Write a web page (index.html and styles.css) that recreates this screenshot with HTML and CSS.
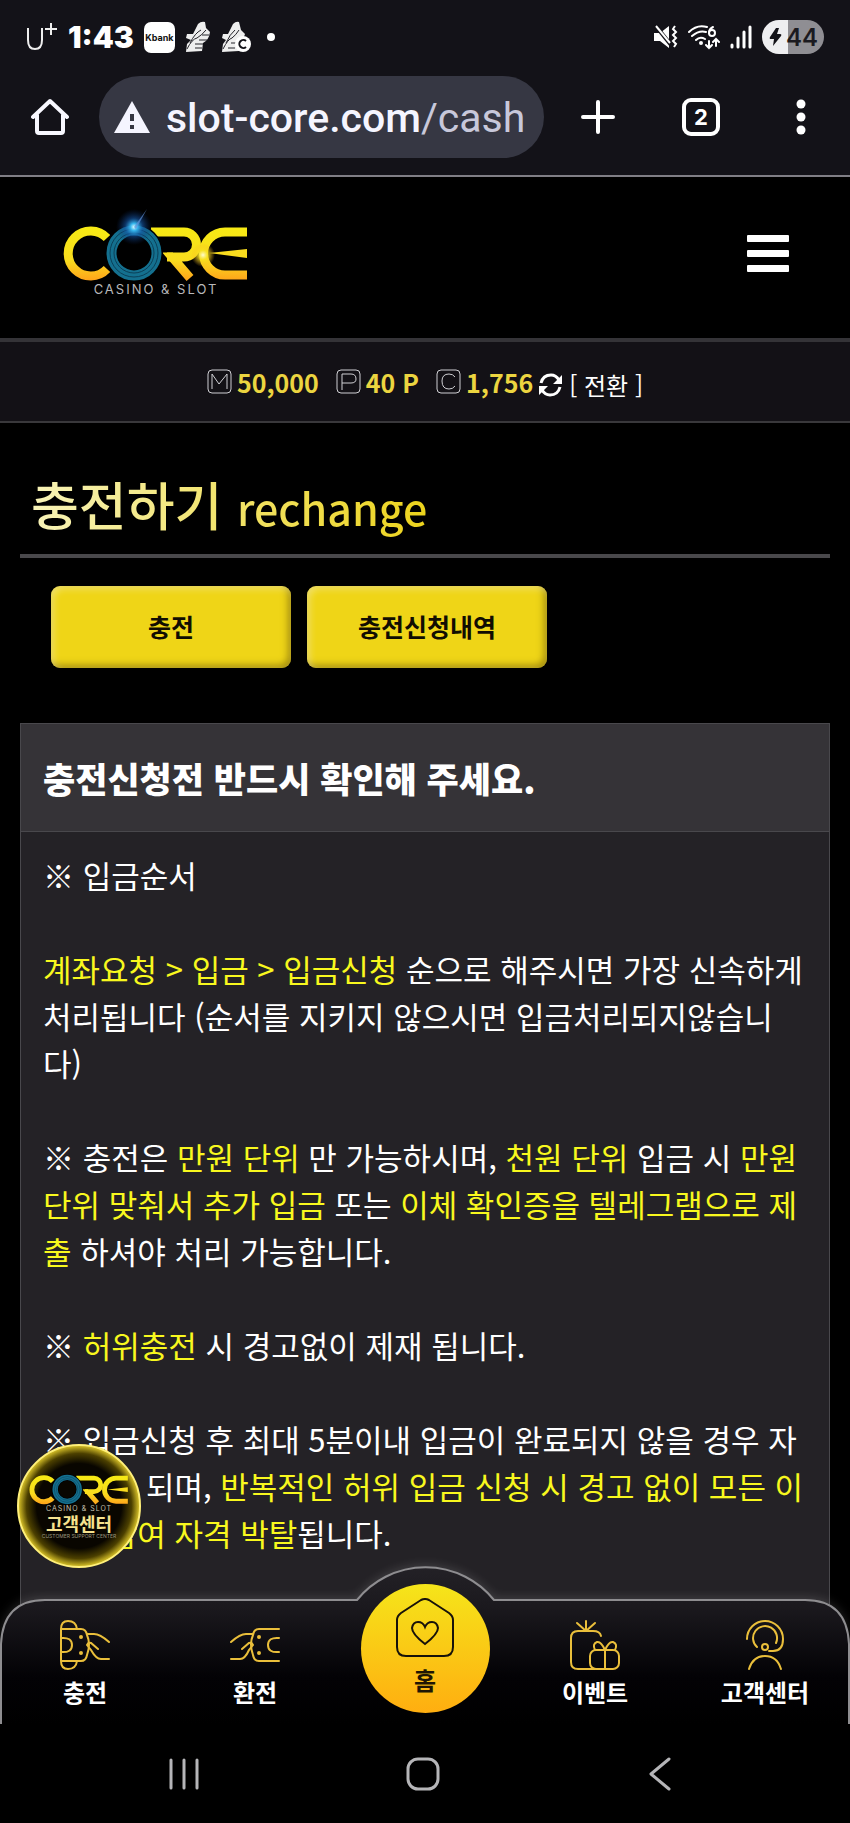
FILE: index.html
```html
<!DOCTYPE html>
<html lang="ko">
<head>
  <meta charset="UTF-8">
  <meta name="viewport" content="width=device-width, initial-scale=1.0">
  <title>충전하기</title>
  <link rel="stylesheet" href="styles.css">
</head>
<body>
  <!-- Shared logo shapes -->
  <svg class="defs" aria-hidden="true">
    <defs>
      <linearGradient id="goldStroke" gradientUnits="userSpaceOnUse" x1="0" y1="28" x2="0" y2="82">
        <stop offset="0" stop-color="#f7ea14"/>
        <stop offset=".6" stop-color="#f9dc1e"/>
        <stop offset="1" stop-color="#ff9f1a"/>
      </linearGradient>
      <radialGradient id="blueFlare">
        <stop offset="0" stop-color="#d8fbff"/>
        <stop offset=".2" stop-color="#35b5ec"/>
        <stop offset=".5" stop-color="#1557a8" stop-opacity=".6"/>
        <stop offset="1" stop-color="#0a2a66" stop-opacity="0"/>
      </radialGradient>
      <radialGradient id="goldFlare">
        <stop offset="0" stop-color="#fffbd0"/>
        <stop offset=".4" stop-color="#f8e21e" stop-opacity=".8"/>
        <stop offset="1" stop-color="#f8b51e" stop-opacity="0"/>
      </radialGradient>
      <symbol id="core" viewBox="0 0 190 82">
        <g fill="none" stroke="url(#goldStroke)" stroke-width="9">
          <path d="M46 38 A22.500 22.500 0 1 0 46 69"/>
          <path d="M90 32 H123 A12 12 0 0 1 123 57 H111 L129 78"/>
          <path d="M186 32 H164 A21.500 21.500 0 0 0 164 75 H186"/>
          <path d="M106 57 H112"/>
        </g>
        <path d="M148 53 L186 49 V58 Z" fill="#f9dc1e"/>
        <circle cx="73" cy="53" r="22.500" fill="none" stroke="#000" stroke-width="13"/>
        <circle cx="73" cy="53" r="22.500" fill="none" stroke="#14708f" stroke-width="10"/>
        <circle cx="73" cy="53" r="24" fill="none" stroke="#0b4058" stroke-width="1"/>
        <circle cx="73" cy="53" r="20" fill="none" stroke="#0b4058" stroke-width="1"/>
      </symbol>
    </defs>
  </svg>

  <div class="status-bar">
    <div class="status-left">
      <svg class="carrier" width="32" height="30" viewBox="0 0 32 30" fill="none" stroke="#eee" stroke-width="2">
        <path d="M2 6 V18 Q2 27 9 27 Q16 27 16 18 V6"/>
        <path d="M19 7 H31 M25 1 V13" />
      </svg>
      <span class="clock">1:43</span>
      <span class="kbank">Kbank</span>
      <svg width="26" height="32" viewBox="0 0 26 32">
        <path d="M13 3 Q16 0 20 1 L21 7 L25 11 Q24 19 18 22 L17 30 L1 31 L2 23 L6 19 L1 17 L2 13 L8 13 Z" fill="#eee"/>
        <path d="M2 28 Q7 18 12 17 Q17 14 21 9 M5 22 Q10 12 16 9 M10 23 h8 M10 27 h7 M14 19 h8 M17 14 h7" stroke="#25242a" fill="none"/>
      </svg>
      <svg class="shoe-c" width="30" height="32" viewBox="0 0 30 32">
        <path d="M12 3 Q15 0 18 1 L20 9 L24 13 L18 30 L1 31 L2 23 L5 19 L1 17 L2 13 L7 13 Z" fill="#eee"/>
        <path d="M2 28 Q7 18 11 17 Q15 14 18 9 M5 22 Q9 13 14 9 M7 27 h7 M10 22 h7" stroke="#25242a" fill="none"/>
        <circle cx="22" cy="23" r="8" fill="#fff"/>
        <path d="M25 20 A4 4 0 1 0 25 26" stroke="#131218" stroke-width="2" fill="none"/>
      </svg>
      <span class="more-dot"></span>
    </div>
    <div class="status-right">
      <svg width="25" height="26" viewBox="0 0 25 26">
        <path d="M1 9 H7 L16 2 V24 L7 17 H1 Z" fill="#fff"/>
        <path d="M2 1 L18 21" stroke="#131218" stroke-width="4"/>
        <path d="M3 2 L17 19" stroke="#fff" stroke-width="2"/>
        <path d="M22 2 l-2 3 3 3 -3 3 3 3 -3 3 3 3 -2 3" stroke="#fff" stroke-width="2" fill="none"/>
      </svg>
      <svg width="32" height="26" viewBox="0 0 32 26" fill="none" stroke="#fff" stroke-width="2" stroke-linecap="round">
        <path d="M1 8 Q9 0 19 3 M4 12 Q11 6 18 8 M8 16 Q12 12 17 15"/>
        <circle cx="13" cy="19" r="1" fill="#fff"/>
        <path d="M25 3 Q21 5 21 9"/><circle cx="24" cy="9" r="3"/>
        <path d="M21 17 V24 M18 21 L21 24 L24 21 M28 22 V15 M25 18 L28 15 L31 18"/>
      </svg>
      <svg width="22" height="26" viewBox="0 0 22 26" stroke="#fff" stroke-width="3" stroke-linecap="round">
        <path d="M2 21 V23 M8 14 V23 M14 8 V23 M20 3 V23"/>
      </svg>
      <span class="battery">
        <svg width="13" height="18" viewBox="0 0 13 18"><path d="M7 0 L1 9 Q0 11 2 11 H5 L4 18 L12 8 Q13 6 11 6 H8 L10 0 Z" fill="#131218"/></svg>
        44
      </span>
    </div>
  </div>

  <div class="browser-bar">
    <button class="icon-btn" aria-label="Home">
      <svg width="38" height="40" viewBox="0 0 38 40" fill="none" stroke="#f8f8ff" stroke-width="4" stroke-linecap="round" stroke-linejoin="round">
        <path d="M2 20 L19 4 L36 20 M6 18 V34 Q6 36 8 36 H30 Q32 36 32 34 V18"/>
      </svg>
    </button>
    <a class="address" href="#">
      <svg width="38" height="34" viewBox="0 0 38 34">
        <path d="M19 1 L37 33 H1 Z" fill="#f5f5ff"/>
        <path d="M19 14 V21 M19 25 V29" stroke="#363743" stroke-width="4"/>
      </svg>
      <span class="url"><span class="host">slot-core.com</span>/cash</span>
    </a>
    <button class="icon-btn plus" aria-label="New tab">
      <svg width="34" height="34" viewBox="0 0 34 34" stroke="#fff" stroke-width="4" stroke-linecap="round"><path d="M2 17 H32 M17 2 V32"/></svg>
    </button>
    <button class="tabs">2</button>
    <button class="icon-btn menu" aria-label="Menu">
      <svg width="10" height="36" viewBox="0 0 10 36" fill="#fff"><circle cx="5" cy="5" r="4.500"/><circle cx="5" cy="18" r="4.500"/><circle cx="5" cy="31" r="4.500"/></svg>
    </button>
  </div>

  <div class="page">
    <header class="site-header">
      <a class="logo" href="#" aria-label="CORE">
        <svg width="190" height="82" viewBox="0 0 190 82">
          <use href="#core" width="190" height="82"/>
          <circle cx="73" cy="27" r="18" fill="url(#blueFlare)"/>
          <path d="M73 27 L86 9 L75 29 Z" fill="#5f92d8" opacity=".7"/>
          <circle cx="142" cy="55" r="12" fill="url(#goldFlare)"/>
        </svg>
        <span class="logo-sub">CASINO &amp; SLOT</span>
      </a>
      <button class="hamburger" aria-label="메뉴"><span></span><span></span><span></span></button>
    </header>

    <div class="balance">
      <span class="balance-item">
        <svg width="25" height="25" viewBox="0 0 25 25" fill="none" stroke="#d0d0d4"><rect x="1" y="1" width="23" height="23" rx="4"/><path d="M5 20 V5 L12 15 L20 5 V20"/></svg>
        <b>50,000</b>
      </span>
      <span class="balance-item">
        <svg width="25" height="25" viewBox="0 0 25 25" fill="none" stroke="#d0d0d4"><rect x="1" y="1" width="23" height="23" rx="4"/><path d="M6 21 V5 H15 Q20 5 20 10 Q20 14 15 14 H6"/></svg>
        <b>40 P</b>
      </span>
      <span class="balance-item">
        <svg width="25" height="25" viewBox="0 0 25 25" fill="none" stroke="#d0d0d4"><rect x="1" y="1" width="23" height="23" rx="4"/><path d="M19 8 Q17 5 13 5 Q6 5 6 12 Q6 20 13 20 Q17 20 19 17"/></svg>
        <b>1,756</b>
      </span>
      <a class="convert" href="#">
        <svg width="23" height="24" viewBox="0 0 23 24" fill="none" stroke="#fff" stroke-width="3">
          <path d="M2 10 Q4 2 12 2 Q17 2 20 7 M21 14 Q19 22 11 22 Q6 22 3 17"/>
          <path d="M23 2 V11 H14 Z M0 22 V13 H9 Z" fill="#fff" stroke="none"/>
        </svg>
        <span>[ 전환 ]</span>
      </a>
    </div>

    <main class="content">
      <h1 class="title"><span>충전하기 <small>rechange</small></span></h1>

      <div class="tab-buttons">
        <button class="gold-btn">충전</button>
        <button class="gold-btn">충전신청내역</button>
      </div>

      <section class="notice">
        <h2>충전신청전 반드시 확인해 주세요.</h2>
        <div class="notice-body">
          <p>※ 입금순서</p>
          <p><em>계좌요청 &gt; 입금 &gt; 입금신청</em> 순으로 해주시면 가장 신속하게 처리됩니다 (순서를 지키지 않으시면 입금처리되지않습니다)</p>
          <p>※ 충전은 <em>만원 단위</em> 만 가능하시며, <em>천원 단위</em> 입금 시 <em>만원 단위 맞춰서 추가 입금</em> 또는 <em>이체 확인증을 텔레그램으로 제출</em> 하셔야 처리 가능합니다.</p>
          <p>※ <em>허위충전</em> 시 경고없이 제재 됩니다.</p>
          <p>※ 입금신청 후 최대 5분이내 입금이 완료되지 않을 경우 자동 취소 되며, <em>반복적인 허위 입금 신청 시 경고 없이 모든 이벤트 참여 자격 박탈</em>됩니다.</p>
        </div>
      </section>
    </main>

    <a class="support" href="#">
      <svg width="102" height="44" viewBox="0 0 190 82"><use href="#core" width="190" height="82"/></svg>
      <span class="support-sub">CASINO &amp; SLOT</span>
      <span class="support-name">고객센터</span>
      <span class="support-en">CUSTOMER SUPPORT CENTER</span>
    </a>

    <nav class="bottom-nav">
      <svg class="nav-bg" viewBox="0 0 850 160" preserveAspectRatio="none">
        <defs>
          <linearGradient id="navFill" x1="0" y1="0" x2="0" y2="1">
            <stop offset="0" stop-color="#232126"/>
            <stop offset=".25" stop-color="#1b191e"/>
            <stop offset=".7" stop-color="#030205"/>
            <stop offset="1" stop-color="#000"/>
          </linearGradient>
        </defs>
        <path d="M1 160 V80 Q3 36 45 36 H357 A88 88 0 0 1 494 36 H805 Q847 36 849 80 V160" fill="url(#navFill)" stroke="#8e8d90" stroke-width="2"/>
      </svg>
      <a class="nav-item" href="#">
        <svg width="50" height="50" viewBox="0 0 50 50" class="nav-icon">
          <path d="M1 9 Q1 1 8 1 Q16 1 17 9 M1 9 V41 Q1 49 8 49 Q16 49 17 41 M1 9 H21 Q26 9 27 15 Q31 24 27 35 Q26 41 21 41 H1 M1 18 Q12 17 12 25 Q12 33 1 32"/>
          <path d="M27 14 H34 Q40 14 49 22 M49 39 H41 Q36 39 31 30 L27 25 M38 29 L31 23 Q28 22 27 25"/>
          <circle cx="21" cy="17" r="1"/><circle cx="21" cy="33" r="1"/>
        </svg>
        <span>충전</span>
      </a>
      <a class="nav-item" href="#">
        <svg width="50" height="50" viewBox="0 0 50 50" class="nav-icon">
          <path d="M49 9 H29 Q24 9 23 15 Q19 24 23 35 Q24 41 29 41 H49 M49 18 Q38 17 38 25 Q38 33 49 32"/>
          <path d="M23 14 H16 Q10 14 1 22 M1 39 H10 Q15 39 19 30 L23 25 M12 29 L19 23 Q22 22 23 25"/>
          <circle cx="29" cy="17" r="1"/><circle cx="29" cy="33" r="1"/>
        </svg>
        <span>환전</span>
      </a>
      <a class="nav-item nav-home" href="#">
        <svg width="60" height="60" viewBox="0 0 60 60" fill="none" stroke="#17120a" stroke-width="2">
          <path d="M26 2 Q30 0 34 2 L54 15 Q58 18 58 22 V49 Q58 58 49 58 H11 Q2 58 2 49 V22 Q2 18 6 15 Z"/>
          <path d="M30 46 Q17 36 17 30 Q18 24 23 24 Q28 24 30 29 Q32 24 37 24 Q42 24 43 30 Q43 36 30 46 Z"/>
        </svg>
        <span>홈</span>
      </a>
      <a class="nav-item" href="#">
        <svg width="50" height="50" viewBox="0 0 50 50" class="nav-icon">
          <path d="M25 49 H8 Q1 49 1 42 V18 Q1 11 8 11 H23 Q30 11 31 16 M16 11 V1 M16 11 L7 3 M16 11 L25 3"/>
          <rect x="20" y="30" width="29" height="19" rx="6"/>
          <path d="M35 30 V48 M35 30 Q31 21 27 22 Q22 24 25 30 M35 30 Q39 21 43 22 Q48 24 45 30"/>
        </svg>
        <span>이벤트</span>
      </a>
      <a class="nav-item" href="#">
        <svg width="50" height="50" viewBox="0 0 50 50" class="nav-icon">
          <path d="M7 19 A18 18 0 1 1 43 19 Q43 31 33 31 H29"/>
          <path d="M17 27 A12 12 0 1 1 36 23"/>
          <circle cx="25" cy="27" r="3"/>
          <path d="M9 49 Q13 36 25 36 Q37 36 41 49"/>
        </svg>
        <span>고객센터</span>
      </a>
    </nav>
  </div>

  <div class="system-nav">
    <button class="icon-btn" aria-label="Recent apps"><svg width="34" height="34" viewBox="0 0 34 34" stroke="#b5b5b8" stroke-width="3" stroke-linecap="round"><path d="M3 3 V31 M16 3 V31 M29 3 V31"/></svg></button>
    <button class="icon-btn" aria-label="Home screen"><svg width="34" height="34" viewBox="0 0 34 34" fill="none" stroke="#b5b5b8" stroke-width="3"><rect x="2" y="2" width="30" height="30" rx="10"/></svg></button>
    <button class="icon-btn" aria-label="Back"><svg width="34" height="34" viewBox="0 0 34 34" fill="none" stroke="#b5b5b8" stroke-width="3" stroke-linecap="round" stroke-linejoin="round"><path d="M26 2 L8 17 L26 32"/></svg></button>
  </div>
</body>
</html>
```

FILE: styles.css
```css
* {
  box-sizing: border-box;
}
body {
  margin: 0;
  height: 100vh;
  display: flex;
  flex-direction: column;
  overflow: hidden;
  background-color: #000;
  color: #fff;
  font-family: "Noto Sans CJK KR", sans-serif;
}
a {
  color: inherit;
  text-decoration: none;
}
button {
  font-family: inherit;
  border: none;
  padding: 0;
  background: none;
  color: inherit;
  cursor: pointer;
}
svg {
  display: block;
  flex-shrink: 0;
}
.defs {
  position: absolute;
  width: 0;
  height: 0;
}

/* Phone status bar */
.status-bar {
  height: 74px;
  flex-shrink: 0;
  padding: 0 26px;
  display: flex;
  justify-content: space-between;
  align-items: center;
  background-color: #131218;
}
.status-left, .status-right {
  display: flex;
  align-items: center;
  gap: 10px;
}
.clock {
  font-family: Inter, sans-serif;
  font-size: 30px;
  font-weight: 900;
}
.kbank {
  width: 31px;
  height: 31px;
  line-height: 31px;
  border-radius: 7px;
  background-color: #fff;
  color: #111;
  font-family: Inter, sans-serif;
  font-size: 9px;
  font-weight: 700;
  text-align: center;
}
.more-dot {
  width: 8px;
  height: 8px;
  margin-left: 6px;
  border-radius: 50%;
  background-color: #fff;
}
.battery {
  width: 62px;
  height: 34px;
  border-radius: 17px;
  padding-left: 7px;
  display: flex;
  align-items: center;
  gap: 4px;
  background: linear-gradient(to right, #eeeef0 26px, #8f8e93 26px);
  color: #1b1a20;
  font-family: Inter, sans-serif;
  font-size: 24px;
  font-weight: 600;
}

/* Browser toolbar */
.browser-bar {
  height: 103px;
  flex-shrink: 0;
  padding: 0 44px 16px 31px;
  display: flex;
  align-items: center;
  background-color: #131218;
  border-bottom: 2px solid #807e85;
}
.address {
  flex: 1;
  min-width: 0;
  height: 82px;
  margin: 0 37px 0 30px;
  padding: 0 12px 0 14px;
  display: flex;
  align-items: center;
  gap: 15px;
  border-radius: 41px;
  background-color: #363743;
}
.url {
  padding-top: 2px;
  white-space: nowrap;
  font-family: Roboto, sans-serif;
  font-size: 41px;
  line-height: 56px;
  color: #c8c8da;
}
.host {
  color: #f5f5ff;
  font-weight: 500;
}
.tabs {
  width: 38px;
  height: 38px;
  margin: 0 76px 0 67px;
  border: 4px solid #fff;
  border-radius: 9px;
  font-family: Inter, sans-serif;
  font-size: 22px;
  font-weight: 700;
  line-height: 30px;
}

.page {
  flex: 1;
  min-height: 0;
  position: relative;
  overflow: hidden;
}
.site-header {
  height: 161px;
  padding: 0 61px 9px;
  display: flex;
  justify-content: space-between;
  align-items: center;
}
.logo {
  padding-bottom: 10px;
  display: flex;
  flex-direction: column;
  align-items: center;
}
.logo-sub {
  font-family: Inter, sans-serif;
  font-size: 13px;
  line-height: 14px;
  letter-spacing: 2px;
  color: #b8b8ba;
}
.hamburger {
  width: 42px;
  display: grid;
  gap: 8px;
}
.hamburger span {
  height: 7px;
  border-radius: 1px;
  background-color: #fff;
}

.balance {
  height: 85px;
  display: flex;
  justify-content: center;
  align-items: center;
  background-color: #131116;
  border-top: 4px solid #343337;
  border-bottom: 2px solid #39383b;
  font-size: 24px;
}
.balance-item {
  display: flex;
  align-items: center;
  gap: 5px;
  margin-right: 17px;
}
.balance b {
  font-size: 25px;
  color: #ecd540;
}
.balance-item:nth-child(3) {
  margin-right: 6px;
}
.convert {
  display: flex;
  align-items: center;
  gap: 7px;
  padding-top: 6px;
}

.content {
  padding: 38px 20px 0;
}
.title {
  margin: 0;
  padding: 0 0 4px 11px;
  border-bottom: 4px solid #49484b;
  font-size: 52px;
  line-height: 86px;
  font-weight: 500;
}
.title span {
  background: linear-gradient(to right, #f8f3b8, #ecd31c);
  -webkit-background-clip: text;
  background-clip: text;
  color: transparent;
}
.title small {
  font-size: 43px;
}
.tab-buttons {
  display: flex;
  gap: 16px;
  padding: 28px 31px 55px;
}
.gold-btn {
  width: 240px;
  height: 82px;
  padding-bottom: 2px;
  border-radius: 9px;
  background-color: #efd517;
  box-shadow: inset 3px 3px 7px rgba(255, 255, 255, 0.35), inset -3px -3px 7px rgba(90, 70, 0, 0.5);
  color: #110d02;
  font-size: 25px;
  font-weight: 700;
}
.notice {
  border: 1px solid #49484c;
  background-color: #242226;
}
.notice h2 {
  margin: 0;
  padding: 0 22px;
  border-bottom: 1px solid #49484c;
  background-color: #353337;
  font-size: 35px;
  line-height: 107px;
  font-weight: 900;
}
.notice-body {
  padding: 19px 22px 120px;
  font-size: 31px;
  line-height: 47px;
}
.notice-body p {
  margin: 0 0 47px;
}
.notice-body em {
  color: #f8f81e;
  font-style: normal;
}

/* Floating support badge */
.support {
  position: absolute;
  z-index: 1;
  left: 17px;
  bottom: 156px;
  width: 124px;
  height: 124px;
  padding-top: 15px;
  display: flex;
  flex-direction: column;
  align-items: center;
  border: 2px solid #fff07a;
  border-radius: 50%;
  background: radial-gradient(circle, #090600 50%, #4c4000 62%, #c5b022 70%);
}
.support-sub {
  font-family: Inter, sans-serif;
  font-size: 7px;
  line-height: 8px;
  letter-spacing: 1px;
  color: #c5c0ae;
}
.support-name {
  font-size: 18px;
  line-height: 20px;
  font-weight: 700;
  color: #f6e28e;
}
.support-en {
  font-family: Inter, sans-serif;
  font-size: 5px;
  line-height: 6px;
  color: #9b967f;
}

.bottom-nav {
  position: absolute;
  left: 0;
  right: 0;
  bottom: 0;
  height: 124px;
  display: grid;
  grid-template-columns: repeat(5, 1fr);
}
.nav-bg {
  position: absolute;
  left: 0;
  bottom: 0;
  width: 100%;
  height: 160px;
  filter: drop-shadow(0 -2px 5px rgba(255, 255, 255, 0.12));
}
.nav-item {
  position: relative;
  padding-top: 20px;
  display: flex;
  flex-direction: column;
  align-items: center;
  gap: 5px;
  font-size: 24px;
  line-height: 34px;
  font-weight: 700;
}
.nav-icon {
  fill: none;
  stroke: #eabf3b;
  stroke-width: 2;
  stroke-linecap: round;
}
.nav-home {
  justify-self: center;
  width: 129px;
  height: 129px;
  margin-top: -16px;
  padding-top: 14px;
  border-radius: 50%;
  background: linear-gradient(#f5e51a, #ffae10);
  color: #201604;
}

.system-nav {
  height: 99px;
  flex-shrink: 0;
  padding: 0 173px 0 168px;
  display: flex;
  justify-content: space-between;
  align-items: center;
}
```
